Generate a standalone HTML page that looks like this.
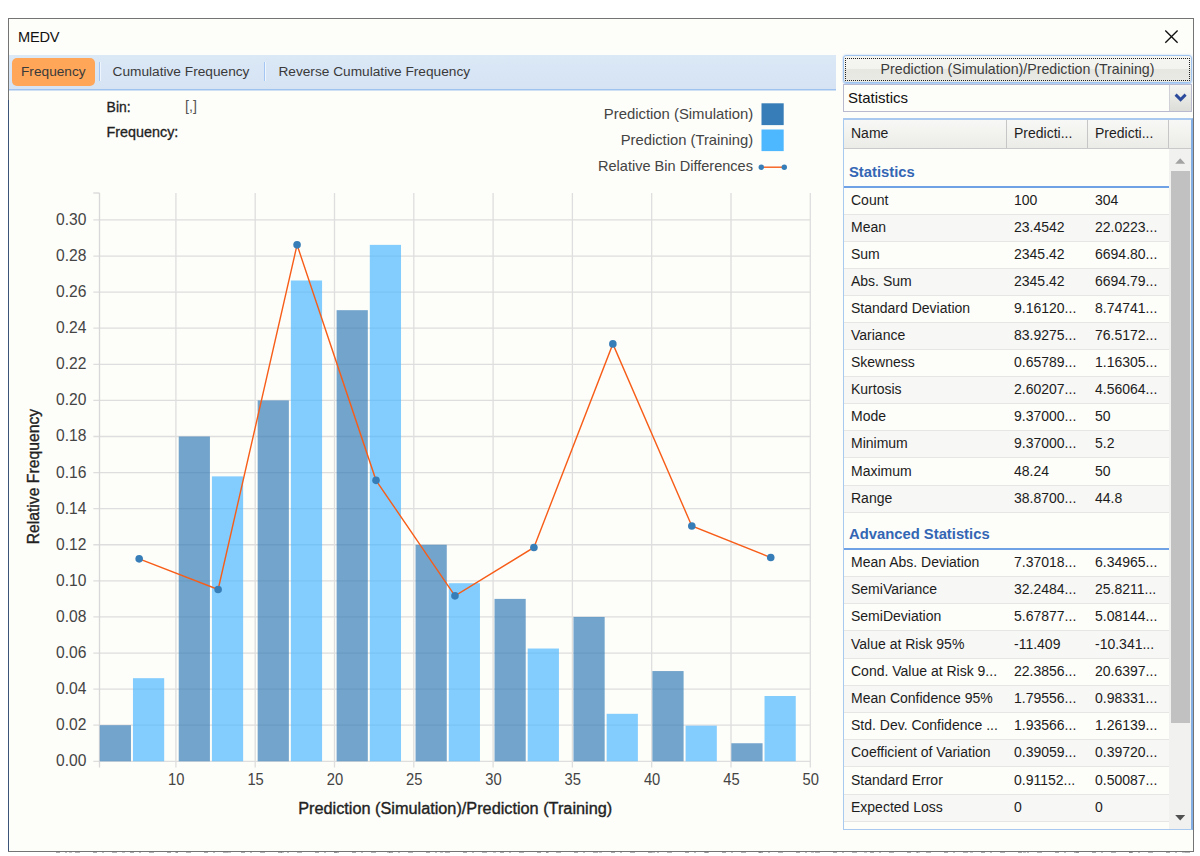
<!DOCTYPE html>
<html>
<head>
<meta charset="utf-8">
<title>MEDV</title>
<style>
html,body{margin:0;padding:0;}
body{width:1200px;height:856px;overflow:hidden;background:#ffffff;position:relative;font-family:"Liberation Sans",sans-serif;color:#1e1e1e;}
.win{position:absolute;left:8px;top:18px;width:1184px;height:832px;background:#fdfdf9;border:1px solid #747474;}
.lb{position:absolute;left:8px;top:100px;width:1px;height:751px;background:#3b5279;}
.abs{position:absolute;white-space:nowrap;}
.title{left:18px;top:29px;font-size:14.6px;line-height:17px;color:#111;letter-spacing:-0.2px;}
.close{position:absolute;left:1163px;top:28px;width:17px;height:17px;}
.toolbar{position:absolute;left:9px;top:55px;width:827px;height:34px;background:linear-gradient(#dbe8f6,#d5e3f3);border-bottom:1px solid #9fc2ee;box-shadow:0 1px 0 #cfe0f5;}
.tbtn{position:absolute;left:12px;top:58px;width:83px;height:28px;border-radius:5px;background:#ffa659;}
.tbtxt{font-size:13.7px;line-height:16px;color:#3a3a3a;top:64px;}
.sep{position:absolute;top:62px;width:1px;height:19px;background:#a3c6f2;box-shadow:1px 0 0 #eef5fd;}
.pbtn{position:absolute;left:843px;top:55px;width:347px;height:26px;border:1px solid #9ec3f0;border-radius:3px;background:linear-gradient(#f5f5f1 0%,#f3f3ef 48%,#e7e7e2 52%,#e9e9e5 100%);box-shadow:0 0 2px #b0cff5, 0 1px 1px #a8c9f2;}
.pbtn .focus{position:absolute;left:1px;top:2px;right:1px;bottom:1px;border:1px dotted #222;}
.pbtn .txt{position:absolute;left:0;right:0;top:5px;text-align:center;font-size:14.2px;line-height:17px;color:#3c3c3c;}
.combo{position:absolute;left:843px;top:84px;width:347px;height:26px;border:1px solid #b9b9cf;background:#fdfdf9;}
.combo .txt{position:absolute;left:4px;top:4px;font-size:15px;line-height:18px;color:#111;}
.combo .dd{position:absolute;right:0;top:0;width:21px;height:26px;background:linear-gradient(#f4f4f2,#dcdcd8);border-left:1px solid #d0d0d8;}
.grid{position:absolute;left:843px;top:118px;width:347px;height:709px;border:1px solid #a9c9ee;border-top:2px solid #a9c9ee;border-right:2px solid #84aee6;background:#fdfdf9;overflow:hidden;}
.ghead{position:absolute;left:844px;top:120px;width:347px;height:28px;background:linear-gradient(#f8f8f6,#ebebe8);border-bottom:1px solid #c9c9c9;}
.ghead span{position:absolute;top:5px;font-size:14px;line-height:17px;color:#1e1e1e;}
.gsep{position:absolute;top:120px;width:1px;height:28px;background:#c6c6c6;}
.row{position:absolute;left:844px;width:325px;border-bottom:1px solid #e6e6e4;box-sizing:border-box;font-size:14px;color:#1c1c1c;background:#fdfdf9;}
.row.alt{background:#f7f7f5;}
.row span{position:absolute;top:0;white-space:nowrap;}
.c1{left:7px;} .c2{left:170px;} .c3{left:251px;}
.gh{position:absolute;left:849px;font-size:14.8px;font-weight:bold;color:#3366b4;line-height:17px;white-space:nowrap;}
.gline{position:absolute;left:844px;width:325px;height:2px;background:#6fa1e6;}
.strack{position:absolute;left:1169px;top:149px;width:22px;height:680px;background:#f1f1f0;}
.sthumb{position:absolute;left:1171px;top:171px;width:19px;height:552px;background:#c1c1c1;}
.chart{position:absolute;left:0;top:0;}
.junk{position:absolute;left:56px;top:852px;width:1134px;height:1px;background:repeating-linear-gradient(90deg,rgba(70,70,70,.45) 0 4px,transparent 4px 9px,rgba(70,70,70,.35) 9px 11px,transparent 11px 19px,rgba(70,70,70,.4) 19px 24px,transparent 24px 37px),repeating-linear-gradient(90deg,transparent 0 13px,rgba(70,70,70,.3) 13px 16px,transparent 16px 53px);}
</style>
</head>
<body>
<div class="win"></div>
<div class="lb"></div>
<div class="abs title">MEDV</div>
<svg class="close" viewBox="0 0 17 17"><path d="M2.3 2.4 L14.6 14.7 M14.6 2.4 L2.3 14.7" stroke="#111" stroke-width="1.35" fill="none"/></svg>

<div class="toolbar"></div>
<div class="tbtn"></div>
<div class="abs tbtxt" style="left:21px;">Frequency</div>
<div class="sep" style="left:99px;"></div>
<div class="abs tbtxt" style="left:112.5px;">Cumulative Frequency</div>
<div class="sep" style="left:264px;"></div>
<div class="abs tbtxt" style="left:278.4px;">Reverse Cumulative Frequency</div>

<div class="pbtn"><div class="focus"></div><div class="txt">Prediction (Simulation)/Prediction (Training)</div></div>
<div class="combo"><div class="txt">Statistics</div><div class="dd"><svg width="21" height="26" viewBox="0 0 21 26"><path d="M5.6 9.6 L10.6 14.6 L15.6 9.6" stroke="#2b4a9b" stroke-width="2.9" fill="none"/></svg></div></div>

<div class="grid"></div>
<div class="ghead"><span style="left:7px;">Name</span><span style="left:170px;">Predicti...</span><span style="left:251px;">Predicti...</span></div>
<div class="gsep" style="left:1006px;"></div><div class="gsep" style="left:1087px;"></div><div class="gsep" style="left:1168px;"></div>
<div class="strack"></div>
<div class="sthumb"></div>
<svg class="abs" style="left:1169px;top:149px;" width="22" height="22" viewBox="0 0 22 22"><path d="M6.2 14.8 L11.2 9.3 L16.2 14.8 Z" fill="#a3a3a3"/></svg>
<svg class="abs" style="left:1169px;top:807px;" width="22" height="22" viewBox="0 0 22 22"><path d="M6.2 8 L16.2 8 L11.2 13.5 Z" fill="#505050"/></svg>

<div class="gh" style="top:164px;">Statistics</div>
<div class="gline" style="top:186px;"></div>
<div class="gh" style="top:526px;">Advanced Statistics</div>
<div class="gline" style="top:548px;"></div>
<div class="row" style="top:188px;height:27px;line-height:25px"><span class="c1">Count</span><span class="c2">100</span><span class="c3">304</span></div>
<div class="row alt" style="top:215px;height:27px;line-height:25px"><span class="c1">Mean</span><span class="c2">23.4542</span><span class="c3">22.0223...</span></div>
<div class="row" style="top:242px;height:27px;line-height:25px"><span class="c1">Sum</span><span class="c2">2345.42</span><span class="c3">6694.80...</span></div>
<div class="row alt" style="top:269px;height:27px;line-height:25px"><span class="c1">Abs. Sum</span><span class="c2">2345.42</span><span class="c3">6694.79...</span></div>
<div class="row" style="top:296px;height:27px;line-height:25px"><span class="c1">Standard Deviation</span><span class="c2">9.16120...</span><span class="c3">8.74741...</span></div>
<div class="row alt" style="top:323px;height:27px;line-height:25px"><span class="c1">Variance</span><span class="c2">83.9275...</span><span class="c3">76.5172...</span></div>
<div class="row" style="top:350px;height:27px;line-height:25px"><span class="c1">Skewness</span><span class="c2">0.65789...</span><span class="c3">1.16305...</span></div>
<div class="row alt" style="top:377px;height:27px;line-height:25px"><span class="c1">Kurtosis</span><span class="c2">2.60207...</span><span class="c3">4.56064...</span></div>
<div class="row" style="top:404px;height:27px;line-height:25px"><span class="c1">Mode</span><span class="c2">9.37000...</span><span class="c3">50</span></div>
<div class="row alt" style="top:431px;height:27px;line-height:25px"><span class="c1">Minimum</span><span class="c2">9.37000...</span><span class="c3">5.2</span></div>
<div class="row" style="top:458px;height:28px;line-height:26px"><span class="c1">Maximum</span><span class="c2">48.24</span><span class="c3">50</span></div>
<div class="row alt" style="top:486px;height:27px;line-height:25px"><span class="c1">Range</span><span class="c2">38.8700...</span><span class="c3">44.8</span></div>
<div class="row" style="top:550px;height:27px;line-height:25px"><span class="c1">Mean Abs. Deviation</span><span class="c2">7.37018...</span><span class="c3">6.34965...</span></div>
<div class="row alt" style="top:577px;height:27px;line-height:25px"><span class="c1">SemiVariance</span><span class="c2">32.2484...</span><span class="c3">25.8211...</span></div>
<div class="row" style="top:604px;height:27px;line-height:25px"><span class="c1">SemiDeviation</span><span class="c2">5.67877...</span><span class="c3">5.08144...</span></div>
<div class="row alt" style="top:631px;height:28px;line-height:26px"><span class="c1">Value at Risk 95%</span><span class="c2">-11.409</span><span class="c3">-10.341...</span></div>
<div class="row" style="top:659px;height:27px;line-height:25px"><span class="c1">Cond. Value at Risk 9...</span><span class="c2">22.3856...</span><span class="c3">20.6397...</span></div>
<div class="row alt" style="top:686px;height:27px;line-height:25px"><span class="c1">Mean Confidence 95%</span><span class="c2">1.79556...</span><span class="c3">0.98331...</span></div>
<div class="row" style="top:713px;height:27px;line-height:25px"><span class="c1">Std. Dev. Confidence ...</span><span class="c2">1.93566...</span><span class="c3">1.26139...</span></div>
<div class="row alt" style="top:740px;height:27px;line-height:25px"><span class="c1">Coefficient of Variation</span><span class="c2">0.39059...</span><span class="c3">0.39720...</span></div>
<div class="row" style="top:767px;height:28px;line-height:26px"><span class="c1">Standard Error</span><span class="c2">0.91152...</span><span class="c3">0.50087...</span></div>
<div class="row alt" style="top:795px;height:27px;line-height:25px"><span class="c1">Expected Loss</span><span class="c2">0</span><span class="c3">0</span></div>
<div class="row" style="top:822px;height:7px;border-bottom:none;"></div>
<div class="junk"></div>

<svg class="chart" width="1200" height="856" viewBox="0 0 1200 856">
<line x1="175.90" y1="193.0" x2="175.90" y2="767.50" stroke="#dedede" stroke-width="1.3"/>
<line x1="255.20" y1="193.0" x2="255.20" y2="767.50" stroke="#dedede" stroke-width="1.3"/>
<line x1="334.50" y1="193.0" x2="334.50" y2="767.50" stroke="#dedede" stroke-width="1.3"/>
<line x1="413.80" y1="193.0" x2="413.80" y2="767.50" stroke="#dedede" stroke-width="1.3"/>
<line x1="493.10" y1="193.0" x2="493.10" y2="767.50" stroke="#dedede" stroke-width="1.3"/>
<line x1="572.40" y1="193.0" x2="572.40" y2="767.50" stroke="#dedede" stroke-width="1.3"/>
<line x1="651.70" y1="193.0" x2="651.70" y2="767.50" stroke="#dedede" stroke-width="1.3"/>
<line x1="731.00" y1="193.0" x2="731.00" y2="767.50" stroke="#dedede" stroke-width="1.3"/>
<line x1="810.30" y1="193.0" x2="810.30" y2="767.50" stroke="#dedede" stroke-width="1.3"/>
<line x1="93.30" y1="761.30" x2="810.30" y2="761.30" stroke="#dedede" stroke-width="1.3"/>
<line x1="93.30" y1="725.21" x2="810.30" y2="725.21" stroke="#dedede" stroke-width="1.3"/>
<line x1="93.30" y1="689.12" x2="810.30" y2="689.12" stroke="#dedede" stroke-width="1.3"/>
<line x1="93.30" y1="653.03" x2="810.30" y2="653.03" stroke="#dedede" stroke-width="1.3"/>
<line x1="93.30" y1="616.94" x2="810.30" y2="616.94" stroke="#dedede" stroke-width="1.3"/>
<line x1="93.30" y1="580.85" x2="810.30" y2="580.85" stroke="#dedede" stroke-width="1.3"/>
<line x1="93.30" y1="544.76" x2="810.30" y2="544.76" stroke="#dedede" stroke-width="1.3"/>
<line x1="93.30" y1="508.67" x2="810.30" y2="508.67" stroke="#dedede" stroke-width="1.3"/>
<line x1="93.30" y1="472.58" x2="810.30" y2="472.58" stroke="#dedede" stroke-width="1.3"/>
<line x1="93.30" y1="436.49" x2="810.30" y2="436.49" stroke="#dedede" stroke-width="1.3"/>
<line x1="93.30" y1="400.40" x2="810.30" y2="400.40" stroke="#dedede" stroke-width="1.3"/>
<line x1="93.30" y1="364.31" x2="810.30" y2="364.31" stroke="#dedede" stroke-width="1.3"/>
<line x1="93.30" y1="328.22" x2="810.30" y2="328.22" stroke="#dedede" stroke-width="1.3"/>
<line x1="93.30" y1="292.13" x2="810.30" y2="292.13" stroke="#dedede" stroke-width="1.3"/>
<line x1="93.30" y1="256.04" x2="810.30" y2="256.04" stroke="#dedede" stroke-width="1.3"/>
<line x1="93.30" y1="219.95" x2="810.30" y2="219.95" stroke="#dedede" stroke-width="1.3"/>
<line x1="99.5" y1="193.0" x2="99.5" y2="767.50" stroke="#d8d8d8" stroke-width="1.3"/>
<line x1="93.30" y1="193.0" x2="99.5" y2="193.0" stroke="#d8d8d8" stroke-width="1.3"/>
<rect x="99.77" y="725.21" width="31.2" height="36.09" fill="#377eb8" fill-opacity="0.7"/>
<rect x="132.97" y="678.20" width="31.2" height="83.10" fill="#4db8ff" fill-opacity="0.7"/>
<rect x="178.72" y="436.49" width="31.2" height="324.81" fill="#377eb8" fill-opacity="0.7"/>
<rect x="211.92" y="476.38" width="31.2" height="284.92" fill="#4db8ff" fill-opacity="0.7"/>
<rect x="257.67" y="400.40" width="31.2" height="360.90" fill="#377eb8" fill-opacity="0.7"/>
<rect x="290.87" y="280.50" width="31.2" height="480.80" fill="#4db8ff" fill-opacity="0.7"/>
<rect x="336.61" y="310.17" width="31.2" height="451.12" fill="#377eb8" fill-opacity="0.7"/>
<rect x="369.81" y="244.88" width="31.2" height="516.42" fill="#4db8ff" fill-opacity="0.7"/>
<rect x="415.56" y="544.76" width="31.2" height="216.54" fill="#377eb8" fill-opacity="0.7"/>
<rect x="448.76" y="583.22" width="31.2" height="178.08" fill="#4db8ff" fill-opacity="0.7"/>
<rect x="494.51" y="598.89" width="31.2" height="162.40" fill="#377eb8" fill-opacity="0.7"/>
<rect x="527.71" y="648.52" width="31.2" height="112.78" fill="#4db8ff" fill-opacity="0.7"/>
<rect x="573.46" y="616.94" width="31.2" height="144.36" fill="#377eb8" fill-opacity="0.7"/>
<rect x="606.66" y="713.81" width="31.2" height="47.49" fill="#4db8ff" fill-opacity="0.7"/>
<rect x="652.40" y="671.07" width="31.2" height="90.23" fill="#377eb8" fill-opacity="0.7"/>
<rect x="685.60" y="725.68" width="31.2" height="35.62" fill="#4db8ff" fill-opacity="0.7"/>
<rect x="731.35" y="743.25" width="31.2" height="18.04" fill="#377eb8" fill-opacity="0.7"/>
<rect x="764.55" y="696.01" width="31.2" height="65.29" fill="#4db8ff" fill-opacity="0.7"/>
<polyline fill="none" stroke="#f75d18" stroke-width="1.4" points="139.17,558.84 218.12,589.51 297.07,244.85 376.01,480.34 454.96,595.83 533.91,547.47 612.86,343.92 691.80,525.99 770.75,557.57"/>
<circle cx="139.17" cy="558.84" r="3.8" fill="#377eb8"/>
<circle cx="218.12" cy="589.51" r="3.8" fill="#377eb8"/>
<circle cx="297.07" cy="244.85" r="3.8" fill="#377eb8"/>
<circle cx="376.01" cy="480.34" r="3.8" fill="#377eb8"/>
<circle cx="454.96" cy="595.83" r="3.8" fill="#377eb8"/>
<circle cx="533.91" cy="547.47" r="3.8" fill="#377eb8"/>
<circle cx="612.86" cy="343.92" r="3.8" fill="#377eb8"/>
<circle cx="691.80" cy="525.99" r="3.8" fill="#377eb8"/>
<circle cx="770.75" cy="557.57" r="3.8" fill="#377eb8"/>
<text x="86.5" y="766.30" text-anchor="end" font-size="16.4" fill="#444" textLength="30.4" lengthAdjust="spacingAndGlyphs" font-family="Liberation Sans, sans-serif">0.00</text>
<text x="86.5" y="730.21" text-anchor="end" font-size="16.4" fill="#444" textLength="30.4" lengthAdjust="spacingAndGlyphs" font-family="Liberation Sans, sans-serif">0.02</text>
<text x="86.5" y="694.12" text-anchor="end" font-size="16.4" fill="#444" textLength="30.4" lengthAdjust="spacingAndGlyphs" font-family="Liberation Sans, sans-serif">0.04</text>
<text x="86.5" y="658.03" text-anchor="end" font-size="16.4" fill="#444" textLength="30.4" lengthAdjust="spacingAndGlyphs" font-family="Liberation Sans, sans-serif">0.06</text>
<text x="86.5" y="621.94" text-anchor="end" font-size="16.4" fill="#444" textLength="30.4" lengthAdjust="spacingAndGlyphs" font-family="Liberation Sans, sans-serif">0.08</text>
<text x="86.5" y="585.85" text-anchor="end" font-size="16.4" fill="#444" textLength="30.4" lengthAdjust="spacingAndGlyphs" font-family="Liberation Sans, sans-serif">0.10</text>
<text x="86.5" y="549.76" text-anchor="end" font-size="16.4" fill="#444" textLength="30.4" lengthAdjust="spacingAndGlyphs" font-family="Liberation Sans, sans-serif">0.12</text>
<text x="86.5" y="513.67" text-anchor="end" font-size="16.4" fill="#444" textLength="30.4" lengthAdjust="spacingAndGlyphs" font-family="Liberation Sans, sans-serif">0.14</text>
<text x="86.5" y="477.58" text-anchor="end" font-size="16.4" fill="#444" textLength="30.4" lengthAdjust="spacingAndGlyphs" font-family="Liberation Sans, sans-serif">0.16</text>
<text x="86.5" y="441.49" text-anchor="end" font-size="16.4" fill="#444" textLength="30.4" lengthAdjust="spacingAndGlyphs" font-family="Liberation Sans, sans-serif">0.18</text>
<text x="86.5" y="405.40" text-anchor="end" font-size="16.4" fill="#444" textLength="30.4" lengthAdjust="spacingAndGlyphs" font-family="Liberation Sans, sans-serif">0.20</text>
<text x="86.5" y="369.31" text-anchor="end" font-size="16.4" fill="#444" textLength="30.4" lengthAdjust="spacingAndGlyphs" font-family="Liberation Sans, sans-serif">0.22</text>
<text x="86.5" y="333.22" text-anchor="end" font-size="16.4" fill="#444" textLength="30.4" lengthAdjust="spacingAndGlyphs" font-family="Liberation Sans, sans-serif">0.24</text>
<text x="86.5" y="297.13" text-anchor="end" font-size="16.4" fill="#444" textLength="30.4" lengthAdjust="spacingAndGlyphs" font-family="Liberation Sans, sans-serif">0.26</text>
<text x="86.5" y="261.04" text-anchor="end" font-size="16.4" fill="#444" textLength="30.4" lengthAdjust="spacingAndGlyphs" font-family="Liberation Sans, sans-serif">0.28</text>
<text x="86.5" y="224.95" text-anchor="end" font-size="16.4" fill="#444" textLength="30.4" lengthAdjust="spacingAndGlyphs" font-family="Liberation Sans, sans-serif">0.30</text>
<text x="176.30" y="785.2" text-anchor="middle" font-size="16.4" fill="#444" textLength="16.4" lengthAdjust="spacingAndGlyphs" font-family="Liberation Sans, sans-serif">10</text>
<text x="255.60" y="785.2" text-anchor="middle" font-size="16.4" fill="#444" textLength="16.4" lengthAdjust="spacingAndGlyphs" font-family="Liberation Sans, sans-serif">15</text>
<text x="334.90" y="785.2" text-anchor="middle" font-size="16.4" fill="#444" textLength="16.4" lengthAdjust="spacingAndGlyphs" font-family="Liberation Sans, sans-serif">20</text>
<text x="414.20" y="785.2" text-anchor="middle" font-size="16.4" fill="#444" textLength="16.4" lengthAdjust="spacingAndGlyphs" font-family="Liberation Sans, sans-serif">25</text>
<text x="493.50" y="785.2" text-anchor="middle" font-size="16.4" fill="#444" textLength="16.4" lengthAdjust="spacingAndGlyphs" font-family="Liberation Sans, sans-serif">30</text>
<text x="572.80" y="785.2" text-anchor="middle" font-size="16.4" fill="#444" textLength="16.4" lengthAdjust="spacingAndGlyphs" font-family="Liberation Sans, sans-serif">35</text>
<text x="652.10" y="785.2" text-anchor="middle" font-size="16.4" fill="#444" textLength="16.4" lengthAdjust="spacingAndGlyphs" font-family="Liberation Sans, sans-serif">40</text>
<text x="731.40" y="785.2" text-anchor="middle" font-size="16.4" fill="#444" textLength="16.4" lengthAdjust="spacingAndGlyphs" font-family="Liberation Sans, sans-serif">45</text>
<text x="810.70" y="785.2" text-anchor="middle" font-size="16.4" fill="#444" textLength="16.4" lengthAdjust="spacingAndGlyphs" font-family="Liberation Sans, sans-serif">50</text>
<text x="455.2" y="813.6" text-anchor="middle" font-size="16" fill="#222" stroke="#222" stroke-width="0.35" textLength="314" lengthAdjust="spacingAndGlyphs" font-family="Liberation Sans, sans-serif">Prediction (Simulation)/Prediction (Training)</text>
<text transform="translate(38.6,476.6) rotate(-90)" text-anchor="middle" font-size="16" fill="#222" stroke="#222" stroke-width="0.35" textLength="135.5" lengthAdjust="spacingAndGlyphs" font-family="Liberation Sans, sans-serif">Relative Frequency</text>
<text x="753.2" y="119.1" text-anchor="end" font-size="14.5" fill="#444" textLength="149.4" lengthAdjust="spacingAndGlyphs" font-family="Liberation Sans, sans-serif">Prediction (Simulation)</text>
<text x="753.2" y="145.3" text-anchor="end" font-size="14.5" fill="#444" textLength="132.5" lengthAdjust="spacingAndGlyphs" font-family="Liberation Sans, sans-serif">Prediction (Training)</text>
<text x="753.0" y="171.1" text-anchor="end" font-size="14.5" fill="#444" textLength="155" lengthAdjust="spacingAndGlyphs" font-family="Liberation Sans, sans-serif">Relative Bin Differences</text>
<rect x="761.5" y="103.3" width="22.2" height="21.8" fill="#377eb8"/>
<rect x="761.5" y="129.5" width="22.2" height="21.6" fill="#4db8ff"/>
<line x1="761.3" y1="167.2" x2="784.3" y2="167.2" stroke="#f75d18" stroke-width="1.4"/>
<circle cx="761.3" cy="167.2" r="2.7" fill="#377eb8"/><circle cx="784.3" cy="167.2" r="2.7" fill="#377eb8"/>
<text x="106.6" y="112" font-size="14.5" fill="#222" stroke="#222" stroke-width="0.3" textLength="24" lengthAdjust="spacingAndGlyphs" font-family="Liberation Sans, sans-serif">Bin:</text>
<text x="106.6" y="136.7" font-size="14.5" fill="#222" stroke="#222" stroke-width="0.3" textLength="71.7" lengthAdjust="spacingAndGlyphs" font-family="Liberation Sans, sans-serif">Frequency:</text>
<text x="185" y="110.9" font-size="14.2" fill="#555" font-family="Liberation Sans, sans-serif">[,]</text>
</svg>
</body>
</html>
